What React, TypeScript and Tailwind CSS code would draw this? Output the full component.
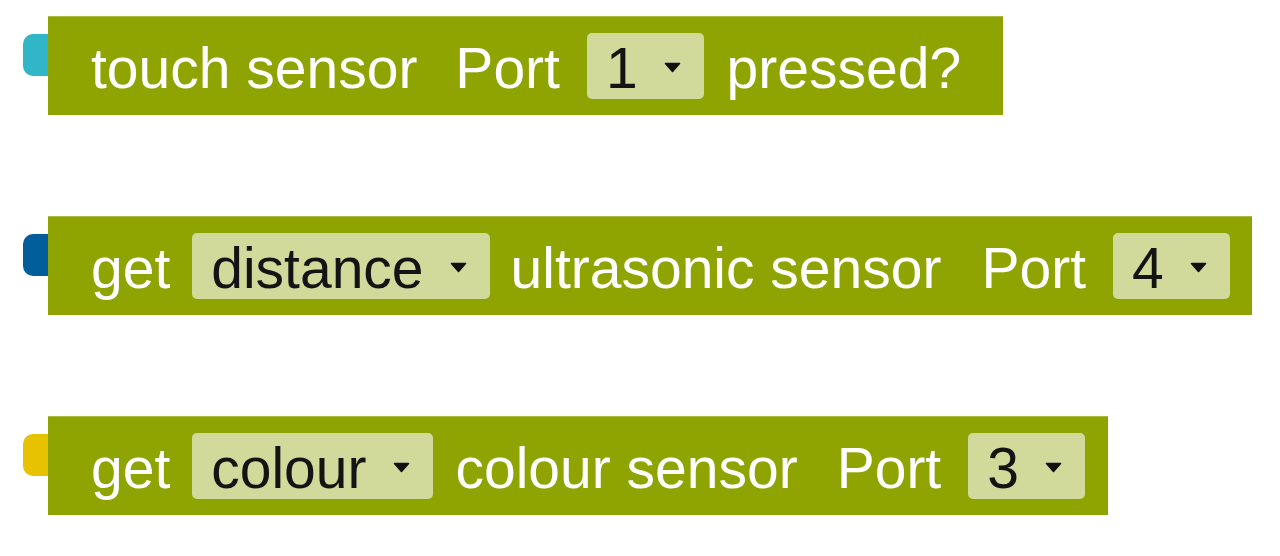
import React from "react";

type Part =
  | { kind: "label"; text: string; ml: number }
  | { kind: "menu"; text: string; ml: number };

type BlockDef = {
  tab: string;
  pr: number;
  parts: Part[];
};

const blocks: BlockDef[] = [
  {
    tab: "bg-[#31b6c8]",
    pr: 42,
    parts: [
      { kind: "label", text: "touch sensor", ml: 0 },
      { kind: "label", text: "Port", ml: 38 },
      { kind: "menu", text: "1", ml: 27 },
      { kind: "label", text: "pressed?", ml: 23 },
    ],
  },
  {
    tab: "bg-[#025e9b]",
    pr: 22,
    parts: [
      { kind: "label", text: "get", ml: 0 },
      { kind: "menu", text: "distance", ml: 22 },
      { kind: "label", text: "ultrasonic sensor", ml: 21 },
      { kind: "label", text: "Port", ml: 40 },
      { kind: "menu", text: "4", ml: 27 },
    ],
  },
  {
    tab: "bg-[#e6c200]",
    pr: 23,
    parts: [
      { kind: "label", text: "get", ml: 0 },
      { kind: "menu", text: "colour", ml: 22 },
      { kind: "label", text: "colour sensor", ml: 23 },
      { kind: "label", text: "Port", ml: 39 },
      { kind: "menu", text: "3", ml: 27 },
    ],
  },
];

function Caret() {
  return (
    <svg width="17" height="11" viewBox="0 0 17 11" className="mt-[3px] shrink-0">
      <path d="M1.5 1.5 L15.5 1.5 L8.5 9.5 Z" fill="#111" stroke="#111" strokeWidth="1.6" strokeLinejoin="round" />
    </svg>
  );
}

function Menu({ text, ml }: { text: string; ml: number }) {
  return (
    <div
      className="flex h-[66px] shrink-0 items-center rounded-[5px] bg-[#d1da9b] pl-[19px] pr-[23px]"
      style={{ marginLeft: ml }}
    >
      <span className="pt-[6px] leading-[57px] text-[#141414]">{text}</span>
      <span className="ml-[26px] flex">
        <Caret />
      </span>
    </div>
  );
}

function Block({ def }: { def: BlockDef }) {
  return (
    <div className="flex">
      {/* output connector tab */}
      <div className={`mt-[18px] h-[42px] w-[25px] shrink-0 rounded-l-[10px] ${def.tab}`} />
      <div
        className="flex h-[99px] items-center bg-[#90a401] pl-[43px] shadow-[inset_0_1px_0_#a9ba3f]"
        style={{ paddingRight: def.pr }}
      >
        {def.parts.map((p, i) =>
          p.kind === "label" ? (
            <span
              key={i}
              className="shrink-0 whitespace-pre pt-[6px] leading-[57px] text-white"
              style={{ marginLeft: p.ml }}
            >
              {p.text}
            </span>
          ) : (
            <Menu key={i} text={p.text} ml={p.ml} />
          )
        )}
      </div>
    </div>
  );
}

export default function App() {
  return (
    <div
      className="flex h-[556px] w-[1280px] flex-col items-start gap-[101px] overflow-hidden bg-white pl-[23px] pt-[16px] text-[57px]"
      style={{ fontFamily: '"Liberation Sans", Arial, sans-serif' }}
    >
      {blocks.map((b, i) => (
        <Block key={i} def={b} />
      ))}
    </div>
  );
}
